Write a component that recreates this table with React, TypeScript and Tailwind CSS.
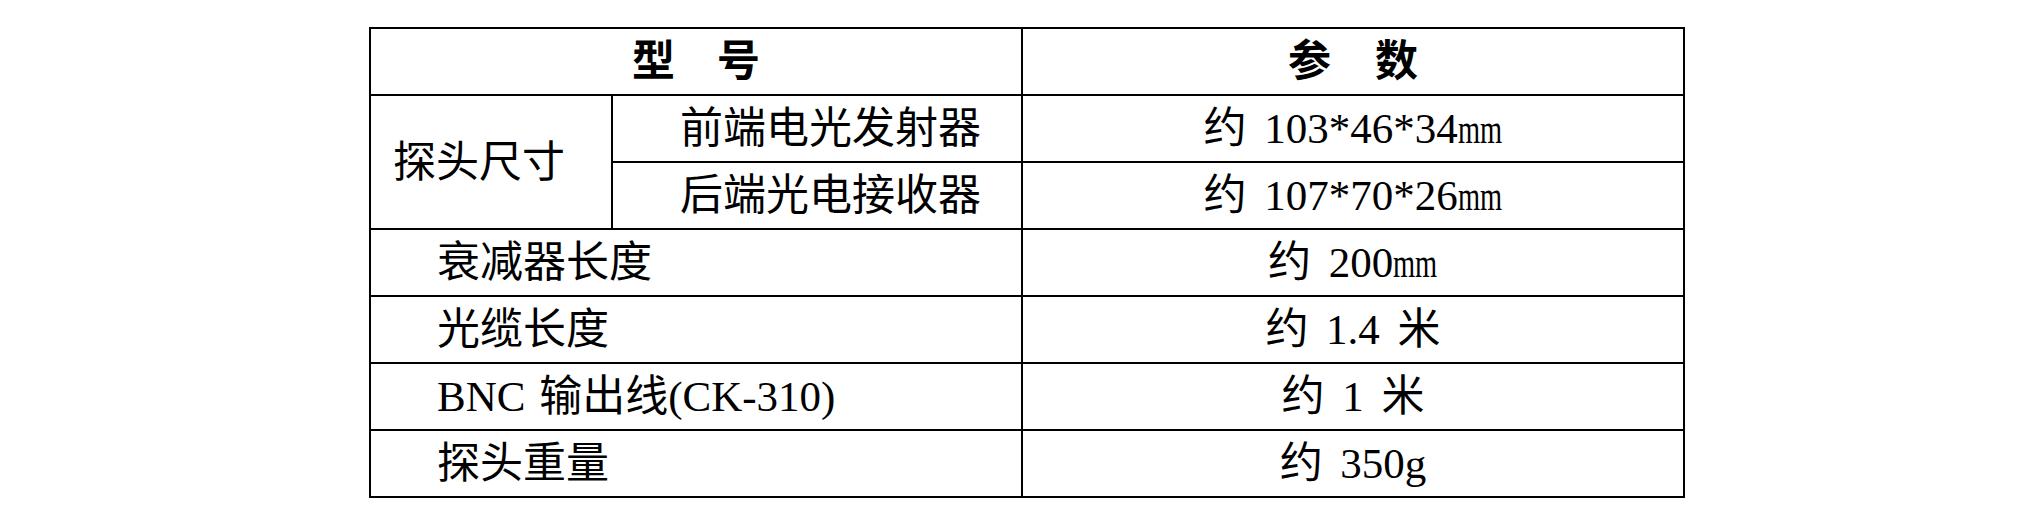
const rows = [
  { label: "衰减器长度", value: "约 200mm" },
  { label: "光缆长度", value: "约 1.4 米" },
  { label: "BNC 输出线(CK-310)", value: "约 1 米" },
  { label: "探头重量", value: "约 350g" },
]

const cell = "border-2 border-black h-[67px] p-0 align-middle"

// SimSun-style narrow "mm"
const Mm = () => <span className="inline-block scale-x-[0.66] origin-left -mr-[22px]">mm</span>

export default function App() {
  return (
    <div className="w-[2042px] h-[516px] bg-white pt-[27px] pl-[369px] font-['Liberation_Serif','Noto_Sans_CJK_SC',serif] text-[43px] leading-none text-black">
      <table className="table-fixed border-collapse w-[1314px]">
        <colgroup>
          <col className="w-[242px]" />
          <col className="w-[410px]" />
          <col className="w-[662px]" />
        </colgroup>
        <tbody>
          {/* Header */}
          <tr>
            <td colSpan={2} className={`${cell} text-center font-bold`}>
              <span className="mr-[42px]">型</span>
              <span>号</span>
            </td>
            <td className={`${cell} text-center font-bold`}>
              <span className="mr-[44px]">参</span>
              <span>数</span>
            </td>
          </tr>

          {/* 探头尺寸 */}
          <tr>
            <td rowSpan={2} className={`${cell} pl-[22px]`}>探头尺寸</td>
            <td className={`${cell} pl-[67px]`}>前端电光发射器</td>
            <td className={`${cell} text-center [word-spacing:7px]`}>
              约 103*46*34<Mm />
            </td>
          </tr>
          <tr>
            <td className={`${cell} pl-[67px]`}>后端光电接收器</td>
            <td className={`${cell} text-center [word-spacing:7px]`}>
              约 107*70*26<Mm />
            </td>
          </tr>

          {rows.map((r) => (
            <tr key={r.label}>
              <td colSpan={2} className={`${cell} pl-[66px] [word-spacing:3px]`}>{r.label}</td>
              <td className={`${cell} text-center [word-spacing:7px]`}>
                {r.value.endsWith("mm") ? (
                  <>
                    {r.value.slice(0, -2)}
                    <Mm />
                  </>
                ) : (
                  r.value
                )}
              </td>
            </tr>
          ))}
        </tbody>
      </table>
    </div>
  )
}
